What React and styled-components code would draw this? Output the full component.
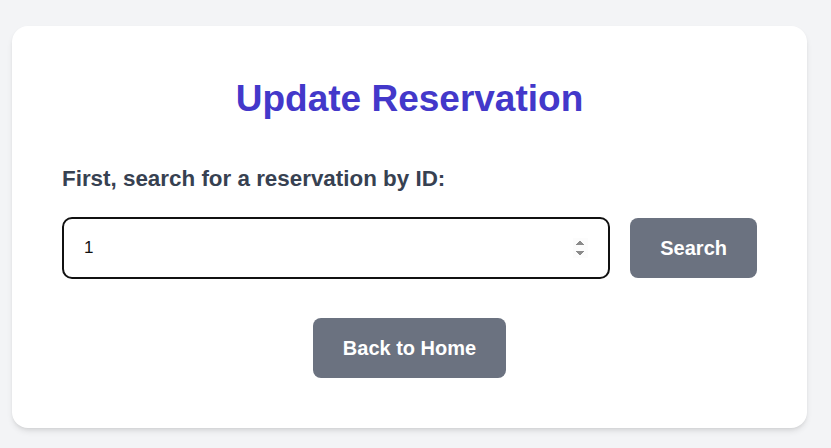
import React, { useState } from "react";
import styled, { createGlobalStyle } from "styled-components";

const GlobalStyle = createGlobalStyle`
  * { box-sizing: border-box; }
  html, body {
    margin: 0;
    background: #f3f4f6;
    font-family: "Liberation Sans", Arial, sans-serif;
  }
`;

const Page = styled.div`
  min-height: 448px;
  padding: 26px 24px 20px 12px;
`;

const Card = styled.div`
  background: #ffffff;
  border-radius: 16px;
  box-shadow: 0 4px 6px -1px rgba(0, 0, 0, 0.1), 0 2px 4px -2px rgba(0, 0, 0, 0.1);
  padding: 50px;
  display: flex;
  flex-direction: column;
`;

const Title = styled.h1`
  margin: 3px 0 46px;
  text-align: center;
  color: #4338ca;
  font-size: 37px;
  line-height: 40px;
  font-weight: 700;
`;

const Label = styled.label`
  display: block;
  margin-bottom: 24px;
  color: #374151;
  font-size: 22.4px;
  line-height: 28px;
  font-weight: 700;
`;

const SearchRow = styled.div`
  display: flex;
  align-items: center;
  gap: 20px;
`;

const IdInput = styled.input`
  flex: 1;
  height: 62px;
  padding: 0 20px 0 20px;
  border: 2px solid #111111;
  border-radius: 10px;
  font-family: inherit;
  font-size: 17px;
  color: #111111;
  background: #ffffff;
  outline: none;

  &::-webkit-inner-spin-button {
    opacity: 1;
  }
`;

const Button = styled.button`
  border: none;
  border-radius: 8px;
  background: #6b7280;
  color: #ffffff;
  font-family: inherit;
  font-size: 20px;
  line-height: 28px;
  font-weight: 700;
  padding: 16px 30px;
  cursor: pointer;
`;

const Footer = styled.div`
  display: flex;
  justify-content: center;
  margin-top: 39px;
`;

export default function App() {
  const [id, setId] = useState("1");

  return (
    <>
      <GlobalStyle />
      <Page>
        <Card>
          <Title>Update Reservation</Title>
          <Label htmlFor="reservation-id">
            First, search for a reservation by ID:
          </Label>
          <SearchRow>
            <IdInput
              id="reservation-id"
              type="number"
              value={id}
              autoFocus
              onChange={(e) => setId(e.target.value)}
            />
            <Button>Search</Button>
          </SearchRow>
          <Footer>
            <Button>Back to Home</Button>
          </Footer>
        </Card>
      </Page>
    </>
  );
}
